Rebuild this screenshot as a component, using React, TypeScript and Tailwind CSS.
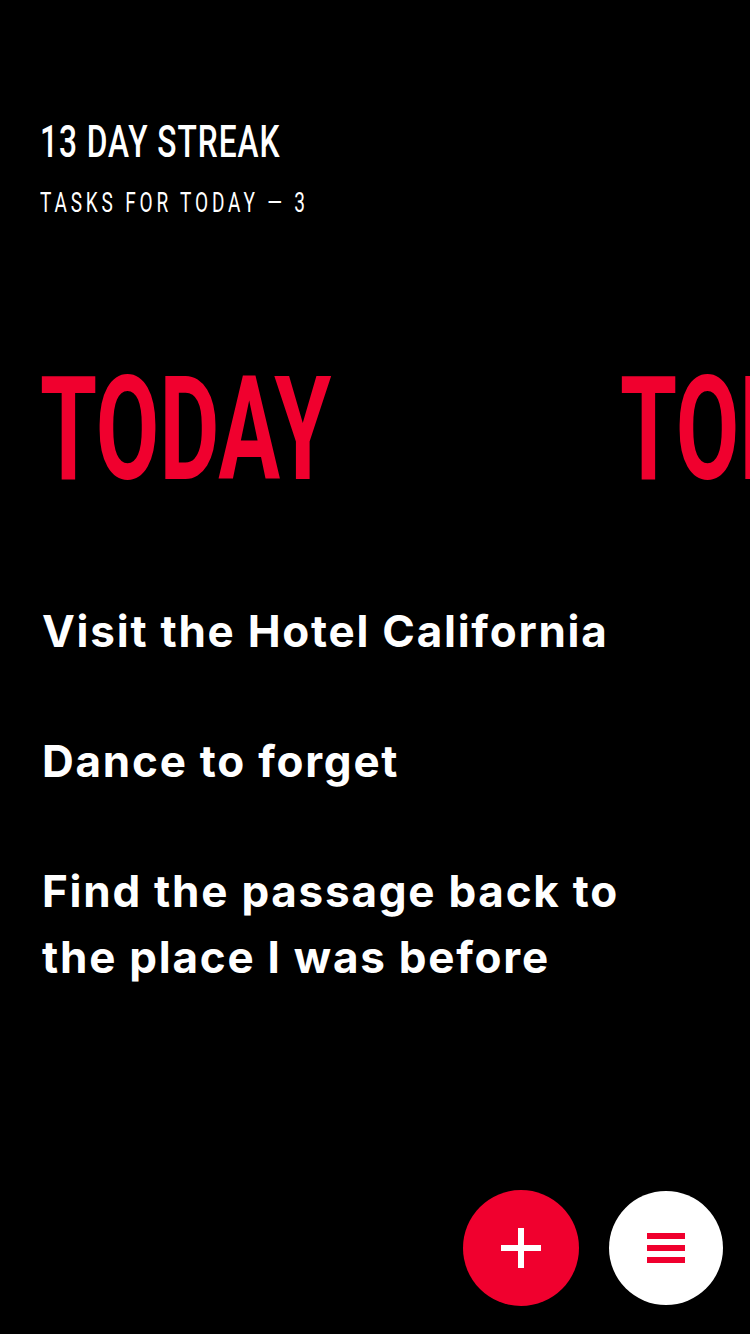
const tasks = [
  "Visit the Hotel California",
  "Dance to forget",
  "Find the passage back to the place I was before",
]

export default function App() {
  return (
    <div className="w-[750px] h-[1334px] bg-black text-white relative overflow-hidden">
      {/* header */}
      <div className="pt-[118px] pl-[40px]">
        <div className="text-[44px] leading-[48px] font-medium font-['Roboto',sans-serif] uppercase tracking-[0.03em] origin-left scale-x-[0.72] whitespace-nowrap">
          13 Day Streak
        </div>
        <div className="mt-[22px] text-[28px] leading-[30px] font-normal font-['Roboto',sans-serif] uppercase tracking-[0.2em] origin-left scale-x-[0.68] whitespace-nowrap">
          Tasks for today — 3
        </div>
      </div>

      {/* day carousel */}
      <div className="mt-[147px] pl-[40px] flex overflow-hidden whitespace-nowrap text-[#f0002e]">
        <div className="w-[580px] shrink-0 text-[144px] leading-[130px] font-bold font-['Roboto',sans-serif] uppercase origin-left scale-x-[0.64]">
          Today
        </div>
        <div className="shrink-0 text-[144px] leading-[130px] font-bold font-['Roboto',sans-serif] uppercase origin-left scale-x-[0.64]">
          Tomorrow
        </div>
      </div>

      {/* tasks */}
      <div className="mt-[103px] pl-[42px] w-[700px] flex flex-col gap-[64px] font-['Inter',sans-serif] font-bold text-[44px] leading-[66px] tracking-[0.04em]">
        {tasks.map((t) => (
          <div key={t}>{t}</div>
        ))}
      </div>

      {/* actions */}
      <div className="absolute right-[27px] bottom-[28px] flex items-center gap-[30px]">
        <button className="w-[116px] h-[116px] rounded-full bg-[#f0002e] flex items-center justify-center">
          <svg width="40" height="40" viewBox="0 0 40 40" fill="white">
            <rect x="0" y="17" width="40" height="6" />
            <rect x="17" y="0" width="6" height="40" />
          </svg>
        </button>
        <button className="w-[114px] h-[114px] rounded-full bg-white flex flex-col items-center justify-center gap-[6px]">
          <span className="block w-[38px] h-[6px] bg-[#f0002e]" />
          <span className="block w-[38px] h-[6px] bg-[#f0002e]" />
          <span className="block w-[38px] h-[6px] bg-[#f0002e]" />
        </button>
      </div>
    </div>
  )
}
